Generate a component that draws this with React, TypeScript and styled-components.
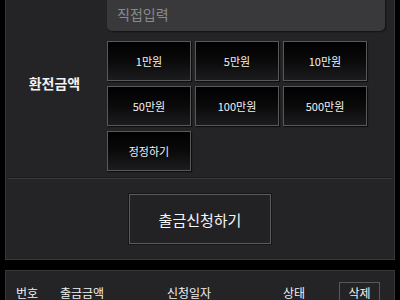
import React from "react";
import styled, { createGlobalStyle } from "styled-components";

const Global = createGlobalStyle`
  html, body { margin: 0; padding: 0; background: #000; }
  body { font-family: "Noto Sans CJK KR", "Noto Sans", sans-serif; color: #eee; overflow: hidden; }
`;

const Page = styled.div`
  width: 400px;
  height: 300px;
  padding: 0 5px;
  box-sizing: border-box;
  overflow: hidden;
`;

const Panel = styled.section<{ $top?: number }>`
  background: #242427;
  border: 1px solid #38383b;
  margin-top: ${(p) => p.$top ?? 0}px;
`;

const FormRow = styled.div`
  display: grid;
  grid-template-columns: 101px 1fr;
  padding-bottom: 6px;
`;

const Label = styled.div`
  display: flex;
  align-items: center;
  justify-content: center;
  font-size: 14px;
  font-weight: 700;
  color: #f2f2f2;
  padding-right: 4px;
`;

const Content = styled.div`
  display: flex;
  flex-direction: column;
`;

const Input = styled.div`
  width: 278px;
  height: 36px;
  box-sizing: border-box;
  background: #39393c;
  border-radius: 0 0 5px 5px;
  box-shadow: 1px 1px 2px rgba(0, 0, 0, 0.5);
  color: #8a8a8c;
  font-size: 14px;
  display: flex;
  align-items: center;
  padding-left: 10px;
  padding-top: 1px;
`;

const AmountGrid = styled.div`
  margin-top: 10px;
  display: grid;
  grid-template-columns: repeat(3, 84px);
  grid-auto-rows: 40px;
  column-gap: 4px;
  row-gap: 5px;
`;

const AmountButton = styled.button`
  box-sizing: border-box;
  border: 1px solid #58585b;
  background: linear-gradient(to bottom, #000 0%, #0a0a0b 50%, #1c1c1e 100%);
  color: #f4f4f4;
  font-family: inherit;
  font-size: 11px;
  padding: 0;
  box-shadow: 1px 1px 1px rgba(0, 0, 0, 0.6);
`;

const Divider = styled.hr`
  margin: 0 2px;
  border: 0;
  height: 2px;
  background: linear-gradient(to bottom, #1c1c1e 50%, #39393c 50%);
`;

const SubmitArea = styled.div`
  display: flex;
  justify-content: center;
  padding: 15px 0 15px;
`;

const SubmitButton = styled.button`
  width: 142px;
  height: 50px;
  box-sizing: border-box;
  border: 1px solid #5a5a5d;
  outline: 1px solid #151517;
  background: #222225;
  color: #f6f6f6;
  font-family: inherit;
  font-size: 15px;
  padding: 0;
`;

const Gap = styled.div`
  height: 10px;
`;

const HeaderRow = styled.div`
  display: grid;
  grid-template-columns: 44px 107px 116px 56px auto;
  align-items: center;
  padding: 11px 0 0 10px;
  font-size: 12px;
  color: #f0f0f0;
`;

const HeaderCell = styled.div`
  white-space: nowrap;
`;

const DeleteButton = styled.button`
  width: 41px;
  height: 20px;
  box-sizing: border-box;
  border: 1px solid #58585b;
  background: #232326;
  color: #f0f0f0;
  font-family: inherit;
  font-size: 12px;
  padding: 0;
`;

const amounts = ["1만원", "5만원", "10만원", "50만원", "100만원", "500만원", "정정하기"];

export default function App() {
  return (
    <>
      <Global />
      <Page>
        <Panel $top={-6}>
          <FormRow>
            <Label>환전금액</Label>
            <Content>
              <Input>직접입력</Input>
              <AmountGrid>
                {amounts.map((a) => (
                  <AmountButton key={a}>{a}</AmountButton>
                ))}
              </AmountGrid>
            </Content>
          </FormRow>
          <Divider />
          <SubmitArea>
            <SubmitButton>출금신청하기</SubmitButton>
          </SubmitArea>
        </Panel>
        <Gap />
        <Panel>
          <HeaderRow>
            <HeaderCell>번호</HeaderCell>
            <HeaderCell>출금금액</HeaderCell>
            <HeaderCell>신청일자</HeaderCell>
            <HeaderCell>상태</HeaderCell>
            <DeleteButton>삭제</DeleteButton>
          </HeaderRow>
        </Panel>
      </Page>
    </>
  );
}
